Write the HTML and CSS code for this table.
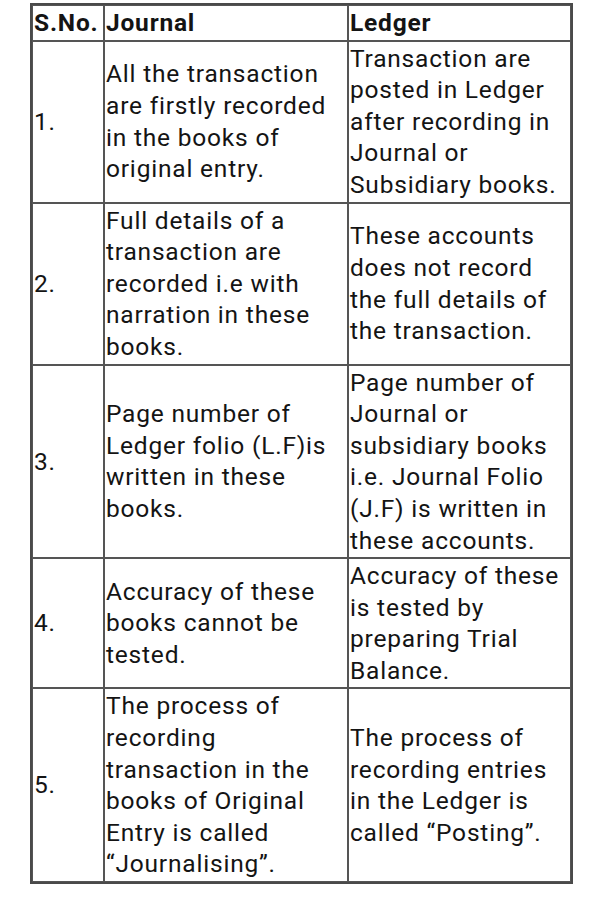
FILE: index.html
```html
<!DOCTYPE html>
<html>
<head>
<meta charset="utf-8">
<link rel="stylesheet" href="styles.css">
</head>
<body>
<table class="cmp">
  <colgroup>
    <col class="c-no">
    <col class="c-j">
    <col class="c-l">
  </colgroup>
  <thead>
    <tr><th>S.No.</th><th>Journal</th><th>Ledger</th></tr>
  </thead>
  <tbody>
    <tr>
      <td>1.</td>
      <td>All the transaction are firstly recorded in the books of original entry.</td>
      <td>Transaction are posted in Ledger after recording in Journal or Subsidiary books.</td>
    </tr>
    <tr>
      <td>2.</td>
      <td>Full details of a transaction are recorded i.e with narration in these books.</td>
      <td>These accounts does not record the full details of the transaction.</td>
    </tr>
    <tr>
      <td>3.</td>
      <td>Page number of Ledger folio (L.F)is written in these books.</td>
      <td>Page number of Journal or subsidiary books i.e. Journal Folio (J.F) is written in these accounts.</td>
    </tr>
    <tr>
      <td>4.</td>
      <td>Accuracy of these books cannot be tested.</td>
      <td>Accuracy of these is tested by preparing Trial Balance.</td>
    </tr>
    <tr>
      <td>5.</td>
      <td>The process of recording transaction in the books of Original Entry is called “Journalising”.</td>
      <td>The process of recording entries in the Ledger is called “Posting”.</td>
    </tr>
  </tbody>
</table>
</body>
</html>
```

FILE: styles.css
```css
html, body {
  margin: 0;
  padding: 0;
  background: #ffffff;
}
body {
  font-family: Roboto, "Noto Sans", sans-serif;
  color: #141414;
}
.cmp {
  margin: 3px 0 0 30px;
  width: 543px;
  table-layout: fixed;
  border-collapse: separate;
  border-spacing: 0;
  border: 2px solid #4a4a4a;
  font-size: 24.5px;
  line-height: 31.6px;
  letter-spacing: 0.8px;
}
.c-no { width: 72px; }
.c-j { width: 244px; }
.c-l { width: 223px; }
.cmp th,
.cmp td {
  border: 1px solid #555555;
  padding: 1px 1px;
  text-align: left;
  vertical-align: middle;
}
.cmp th {
  font-weight: 700;
}
```
